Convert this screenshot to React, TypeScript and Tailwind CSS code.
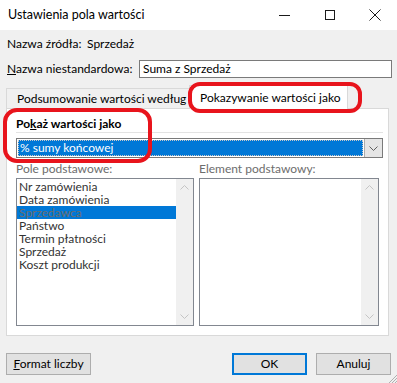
import React from "react";

const Chevron = ({ up = false, color = "#606060" }: { up?: boolean; color?: string }) => (
  <svg width="9" height="5" viewBox="0 0 9 5" className="block">
    <path d={up ? "M0.5 4.5 L4.5 0.5 L8.5 4.5" : "M0.5 0.5 L4.5 4.5 L8.5 0.5"} fill="none" stroke={color} strokeWidth="1" />
  </svg>
);

const ScrollBar = () => (
  <div className="w-[17px] h-full bg-[#f0f0f0] flex flex-col items-center justify-between py-[6px]">
    <Chevron up color="#c4c4c4" />
    <Chevron color="#c4c4c4" />
  </div>
);

const items = [
  "Nr zamówienia",
  "Data zamówienia",
  "Sprzedawca",
  "Państwo",
  "Termin płatności",
  "Sprzedaż",
  "Koszt produkcji",
];

export default function App() {
  return (
    <div
      className="relative w-[397px] h-[383px] bg-[#f0f0f0] overflow-hidden text-[12px] text-black whitespace-nowrap"
      style={{ fontFamily: 'Lato, "Noto Sans", sans-serif' }}
    >
      {/* Title bar */}
      <div className="h-[30px] bg-white flex items-center">
        <div className="pl-[8px] flex-1 text-[12.5px] leading-[14px]">Ustawienia pola wartości</div>
        <div className="flex items-center h-full">
          <div className="w-[46px] h-full flex items-center justify-center">
            <div className="w-[11px] h-px bg-[#1a1a1a]" />
          </div>
          <div className="w-[45px] h-full flex items-center justify-center">
            <div className="w-[10px] h-[10px] border border-[#1a1a1a]" />
          </div>
          <div className="w-[45px] h-full flex items-center justify-center">
            <svg width="12" height="12" viewBox="0 0 12 12">
              <path d="M0.5 0.5 L11.5 11.5 M11.5 0.5 L0.5 11.5" stroke="#1a1a1a" strokeWidth="1" />
            </svg>
          </div>
        </div>
      </div>

      {/* Source name */}
      <div className="mt-[7px] h-[14px] leading-[14px] flex pl-[7px]">
        <span className="w-[80px]">Nazwa źródła:</span>
        <span>Sprzedaż</span>
      </div>

      {/* Custom name */}
      <div className="mt-[9px] h-[18px] flex items-center pl-[7px]">
        <span className="w-[132px] leading-[14px]">
          <span className="underline">N</span>azwa niestandardowa:
        </span>
        <div className="w-[253px] h-[18px] bg-white border border-[#7a7a7a] flex items-center pl-[3px] leading-[14px]">
          Suma z Sprzedaż
        </div>
      </div>

      {/* Tabs */}
      <div className="mt-[7px] h-[24px] flex pl-[6px] relative z-10">
        <div className="mt-[3px] w-[183px] h-[21px] border-t border-l border-[#d9d9d9] flex items-center pl-[10px] leading-[14px]">
          Podsumowanie wartości według
        </div>
        <div className="w-[159px] h-[24px] bg-white border border-b-0 border-[#d9d9d9] flex items-center pl-[10px] leading-[14px]">
          Pokazywanie wartości jako
        </div>
      </div>

      {/* Panel */}
      <div className="-mt-px ml-[6px] w-[383px] h-[228px] bg-white border border-[#d9d9d9] px-[9px] pt-[8px]">
        <div className="h-[14px] leading-[14px] font-bold">
          Po<span className="underline">k</span>aż wartości jako
        </div>
        <div className="mt-[1px] h-px bg-[#e3e3e3] w-[367px]" />
        <div className="mt-[5px] w-[367px] h-[20px] border border-[#7a7a7a] flex">
          <div className="flex-1 m-px bg-[#0078d7] border border-dotted border-[#c8c8c8] text-white flex items-center pl-[1px] leading-[14px]">
            % sumy końcowej
          </div>
          <div className="w-[18px] bg-[#e5e5e5] border-l border-[#acacac] flex items-center justify-center">
            <Chevron />
          </div>
        </div>

        <div className="mt-[4px] flex">
          <div className="w-[187px]">
            <div className="h-[14px] leading-[14px] text-[#6d6d6d]">Pole podstawowe:</div>
            <div className="mt-[2px] w-[178px] h-[148px] border border-[#828790] bg-white flex">
              <div className="flex-1 pt-px">
                {items.map((it, i) => (
                  <div
                    key={it}
                    className={
                      "h-[13px] leading-[13px] pl-[2px] " +
                      (i === 2 ? "bg-[#0078d7] text-[#6d6d6d]" : "text-[#333333]")
                    }
                  >
                    {it}
                  </div>
                ))}
              </div>
              <ScrollBar />
            </div>
          </div>
          <div className="w-[180px]">
            <div className="h-[14px] leading-[14px] text-[#6d6d6d]">Element podstawowy:</div>
            <div className="mt-[2px] w-[180px] h-[148px] border border-[#828790] bg-white flex">
              <div className="flex-1" />
              <ScrollBar />
            </div>
          </div>
        </div>
      </div>

      {/* Buttons */}
      <div className="mt-[17px] flex pl-[6px]">
        <div className="w-[85px] h-[22px] bg-[#e1e1e1] border border-[#adadad] flex items-center justify-center leading-[14px]">
          <span>
            <span className="underline">F</span>ormat liczby
          </span>
        </div>
        <div className="ml-[141px] w-[75px] h-[22px] bg-[#e1e1e1] border-2 border-[#0078d7] flex items-center justify-center leading-[14px]">
          OK
        </div>
        <div className="ml-[9px] w-[75px] h-[22px] bg-[#e1e1e1] border border-[#adadad] flex items-center justify-center leading-[14px]">
          Anuluj
        </div>
      </div>

      {/* Resize grip */}
      <svg className="absolute right-0 bottom-0" width="10" height="10" viewBox="0 0 10 10">
        <path d="M10 2 L2 10 M10 5 L5 10 M10 8 L8 10" stroke="#b0b0b0" strokeWidth="1" />
      </svg>

      {/* Red annotation ovals */}
      <div className="absolute left-[188px] top-[82px] w-[174px] h-[31px] border-[4px] border-[#e8141c] rounded-[12px] pointer-events-none z-20" />
      <div className="absolute left-[3px] top-[108px] w-[149px] h-[55px] border-[4px] border-[#e8141c] rounded-[14px] pointer-events-none z-20" />
    </div>
  );
}
